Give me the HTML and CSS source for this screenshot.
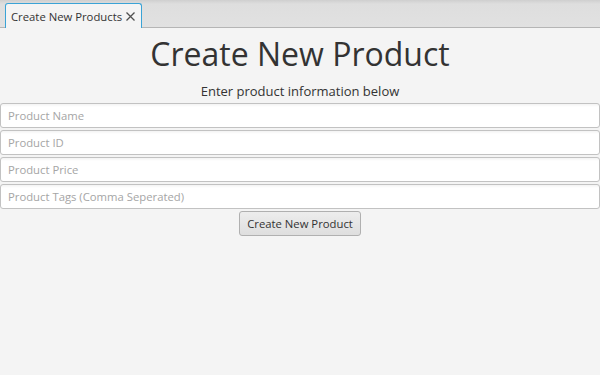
FILE: index.html
```html
<!DOCTYPE html>
<html>
<head>
<meta charset="utf-8">
<link rel="stylesheet" href="styles.css">
</head>
<body>
<div class="tabbar">
  <div class="tab"><span class="tab-label">Create New Products</span><svg class="tab-close" width="9" height="9" viewBox="0 0 9 9"><path d="M0.5 0.5L8.5 8.5M8.5 0.5L0.5 8.5" stroke="#505050" stroke-width="1.3" fill="none"/></svg></div>
</div>
<main class="content">
  <h1 class="title">Create New Product</h1>
  <p class="subtitle">Enter product information below</p>
  <div class="fields">
    <input class="field" type="text" placeholder="Product Name">
    <input class="field" type="text" placeholder="Product ID">
    <input class="field" type="text" placeholder="Product Price">
    <input class="field" type="text" placeholder="Product Tags (Comma Seperated)">
  </div>
  <div class="actions">
    <button class="btn">Create New Product</button>
  </div>
</main>
</body>
</html>
```
FILE: styles.css
```css
html, body {
  margin: 0;
  padding: 0;
  height: 100%;
  background: #f4f4f4;
  font-family: "Open Sans", "Noto Sans", sans-serif;
  color: #333;
}
.tabbar {
  height: 28px;
  background: linear-gradient(#cfcfcf, #dedede 4px, #e1e1e1);
  border-bottom: 1px solid #b5b5b5;
  display: flex;
  align-items: flex-end;
  padding-left: 5px;
  box-sizing: border-box;
}
.tab {
  box-sizing: border-box;
  border: 1px solid #3aa3d6;
  border-bottom: none;
  border-radius: 3px 3px 0 0;
  background: #f4f4f4;
  margin-bottom: -1px;
  height: 25px;
  display: flex;
  align-items: center;
  padding: 0 6px 0 5px;
  gap: 4px;
  font-size: 11.3px;
  color: #333;
}
.tab-close {
  display: block;
  margin-top: 1px;
}
.content {
  display: flex;
  flex-direction: column;
}
.title {
  margin: 6px 0 0;
  text-align: center;
  font-weight: 400;
  font-size: 32px;
  line-height: 40px;
  color: #333;
}
.subtitle {
  margin: 8px 0 3px;
  text-align: center;
  font-size: 13px;
  line-height: 18px;
  color: #333;
}
.fields {
  display: flex;
  flex-direction: column;
  gap: 2px;
}
.field {
  height: 25px;
  box-sizing: border-box;
  margin: 0;
  border: 1px solid #c2c2c2;
  border-radius: 3px;
  background: linear-gradient(#f3f3f3, #fff 3px);
  padding: 0 7px;
  font-family: inherit;
  font-size: 11.3px;
  color: #333;
  outline: none;
}
.field::placeholder {
  color: #a5a5a5;
}
.actions {
  display: flex;
  justify-content: center;
  padding-top: 2px;
}
.btn {
  height: 25px;
  padding: 0 7px;
  font-family: inherit;
  font-size: 11.3px;
  color: #333;
  border: 1px solid #b0b0b0;
  border-radius: 3px;
  background: linear-gradient(#ededed, #dedede);
}
```
